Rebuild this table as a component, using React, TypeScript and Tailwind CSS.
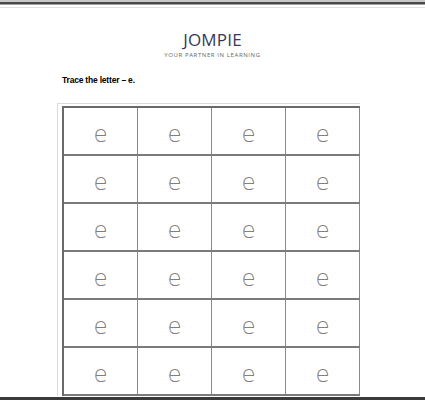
import React from "react";

export default function App() {
  const rows = Array.from({ length: 6 });
  const cols = Array.from({ length: 4 });
  return (
    <div className="w-[425px] h-[400px] overflow-hidden bg-white relative" style={{ fontFamily: '"Open Sans", sans-serif' }}>
      <div className="h-[2px] bg-[#c8c8c8]" />
      <div className="h-[2px] bg-[#4a4a4a]" />
      <div className="h-[1px] bg-[#a0a0a0]" />
      <div className="h-[2px] bg-white" />
      <div className="h-[1px] bg-[#e2e2e2]" />
      <div className="flex flex-col items-center pt-[23px]">
        <div className="text-[17px] leading-[18px] font-normal text-[#38385a] tracking-[0.2px]">JOMPIE</div>
        <div className="text-[6px] leading-[8px] text-[#666] tracking-[0.6px] mt-[2px]">YOUR PARTNER IN LEARNING</div>
      </div>
      <div className="pl-[62px] mt-[16px] text-[8.5px] leading-[11px] font-bold text-black tracking-[-0.2px]" style={{ fontFamily: '"Liberation Sans", sans-serif' }}>
        Trace the letter – e.
      </div>
      <div className="ml-[57px] mt-[17px] w-[303px] border-l border-t border-[#dcdcdc] pl-[4px] pt-[2px]">
        <div className="w-[298px] border-l-2 border-t-2 border-[#6a6a6a]">
          {rows.map((_, r) => (
            <div key={r} className="flex h-[48px] border-b-2 border-[#7a7a7a]">
              {cols.map((_, c) => (
                <div
                  key={c}
                  className="w-[74px] h-full border-r border-[#8a8a8a] flex items-center justify-center text-[23px] font-extralight text-[#808080] leading-none pt-[7px]"
                  style={{ fontFamily: '"DejaVu Sans", sans-serif' }}
                >
                  e
                </div>
              ))}
            </div>
          ))}
        </div>
      </div>
      <div className="absolute left-0 right-0 bottom-0 h-[3px] bg-[#3a3a3a]" />
    </div>
  );
}
